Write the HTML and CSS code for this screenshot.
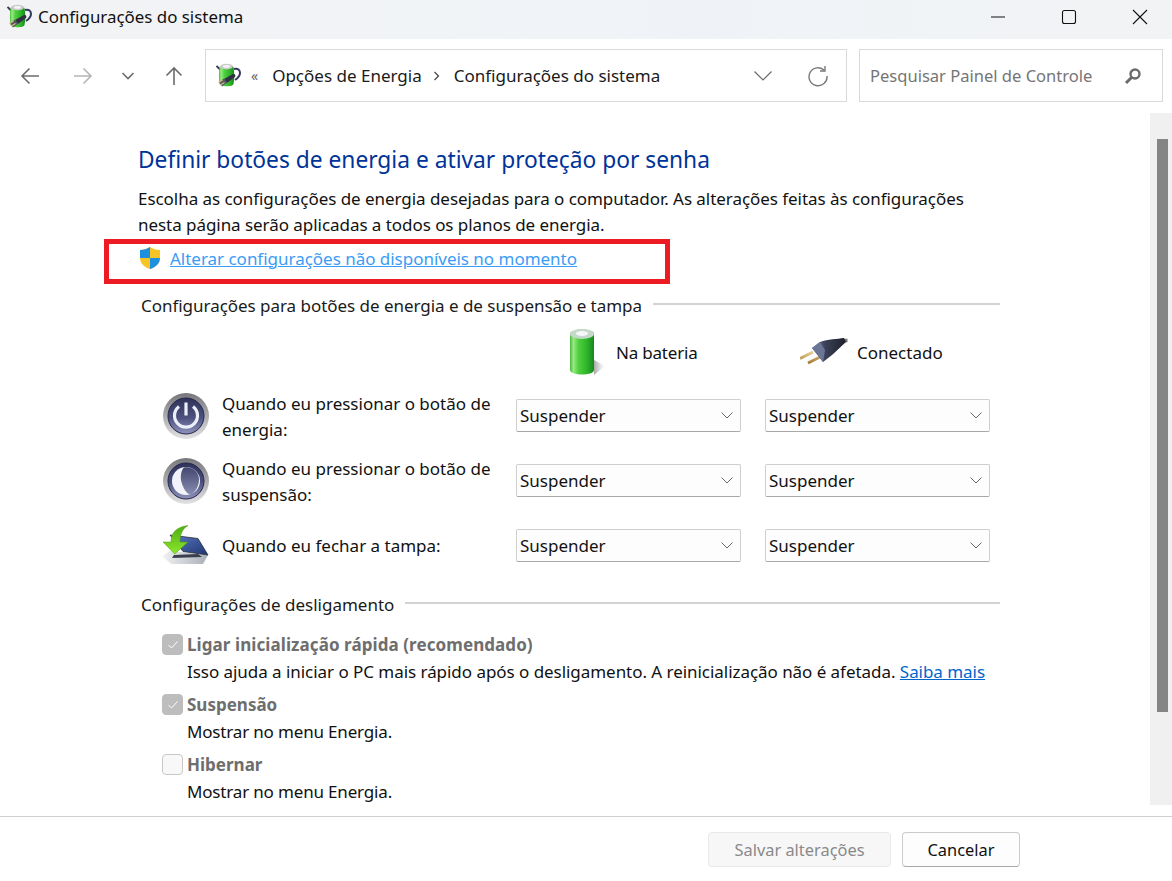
FILE: index.html
```html
<!DOCTYPE html>
<html lang="pt-BR">
<head>
<meta charset="utf-8">
<title>Configurações do sistema</title>
<link rel="stylesheet" href="styles.css">
</head>
<body>
<svg class="defs" width="0" height="0" aria-hidden="true">
  <defs>
    <linearGradient id="gBat" x1="0" x2="1" y1="0" y2="0">
      <stop offset="0" stop-color="#48b83e"/><stop offset=".14" stop-color="#9aea84"/><stop offset=".35" stop-color="#4fd03f"/><stop offset=".7" stop-color="#2fb52b"/><stop offset="1" stop-color="#17871c"/>
    </linearGradient>
    <linearGradient id="gShadow" x1="0" x2="1" y1="0" y2="0">
      <stop offset="0" stop-color="#8a8a8a" stop-opacity=".75"/><stop offset="1" stop-color="#bbb" stop-opacity="0"/>
    </linearGradient>
    <linearGradient id="gRing" x1="0" x2="0" y1="0" y2="1">
      <stop offset="0" stop-color="#77777b"/><stop offset="1" stop-color="#e2e2e4"/>
    </linearGradient>
    <linearGradient id="gDisc" x1="0" x2="0" y1="0" y2="1">
      <stop offset="0" stop-color="#2e3258"/><stop offset=".55" stop-color="#4d5180"/><stop offset="1" stop-color="#9094bb"/>
    </linearGradient>
    <linearGradient id="gMoon" x1="0" x2="0" y1="0" y2="1">
      <stop offset="0" stop-color="#43476f"/><stop offset="1" stop-color="#8a8eb2"/>
    </linearGradient>
    <linearGradient id="gPlug" x1="0" x2="1" y1="0" y2="0">
      <stop offset="0" stop-color="#6d7694"/><stop offset=".4" stop-color="#3a4058"/><stop offset="1" stop-color="#1f2028"/>
    </linearGradient>
    <linearGradient id="gGold" x1="0" x2="0" y1="0" y2="1">
      <stop offset="0" stop-color="#e6cf95"/><stop offset="1" stop-color="#a67c32"/>
    </linearGradient>
    <linearGradient id="gArrow" x1="0" x2="0" y1="0" y2="1">
      <stop offset="0" stop-color="#4fae12"/><stop offset="1" stop-color="#8ce62c"/>
    </linearGradient>
    <linearGradient id="gScreen" x1="0" x2="1" y1="0" y2="1">
      <stop offset="0" stop-color="#5b7cc4"/><stop offset="1" stop-color="#1f356f"/>
    </linearGradient>
    <linearGradient id="gBase" x1="0" x2="1" y1="0" y2="0">
      <stop offset="0" stop-color="#f2f3f5"/><stop offset="1" stop-color="#a9adb6"/>
    </linearGradient>
    <symbol id="appicon" viewBox="0 0 25 25">
      <path d="M0.500 3l4 4" stroke="#34385c" stroke-width="1.800"/>
      <path d="M18 6c4-1 6 1 6 4 0 3-2 5-5 7" fill="none" stroke="#34385c" stroke-width="2"/>
      <path d="M3.500 4c0-2 13.500-2 14 0 1 6 1 12 0 17-.5 3-13 3-14 0-.8-5-.8-11 0-17z" fill="url(#gBat)"/>
      <ellipse cx="10.500" cy="3.600" rx="6.500" ry="2.800" fill="#c9ccc9"/>
      <ellipse cx="10.500" cy="3.400" rx="3.500" ry="1.300" fill="#f4f4f4"/>
      <path d="M8 16l9-5c2-.5 3 1 2 3l-8 6z" fill="#2f3140"/>
      <path d="M3 19l5-3.500 3 4.500-5 3.500z" fill="#555866"/>
      <path d="M2.500 19.500l4-2.500M4.500 22l4-2.500" stroke="#d8bb78" stroke-width="1.300"/>
    </symbol>
  </defs>
</svg>

<div class="window">
  <header class="titlebar">
    <svg class="app-icon" width="25" height="25"><use href="#appicon"/></svg>
    <span class="title-text">Configurações do sistema</span>
    <div class="win-controls">
      <svg width="16" height="16" viewBox="0 0 16 16"><path d="M1 8h14" stroke="#111" fill="none"/></svg>
      <svg width="16" height="16" viewBox="0 0 16 16"><rect x="1.500" y="1.500" width="13" height="13" rx="2" stroke="#111" stroke-width="1.100" fill="none"/></svg>
      <svg width="16" height="16" viewBox="0 0 16 16"><path d="M1 1l14 14M15 1L1 15" stroke="#111" stroke-width="1.100" fill="none"/></svg>
    </div>
  </header>

  <nav class="toolbar">
    <div class="nav-buttons">
      <svg class="nav-back" width="20" height="20" viewBox="0 0 20 20"><path d="M19 10H2M9.500 2.500L2 10l7.500 7.500" stroke="#6b6b6b" stroke-width="1.600" fill="none"/></svg>
      <svg class="nav-fwd" width="20" height="20" viewBox="0 0 20 20"><path d="M1 10h17M10.500 2.500L18 10l-7.500 7.500" stroke="#b5b5b5" stroke-width="1.600" fill="none"/></svg>
      <svg class="nav-drop" width="14" height="14" viewBox="0 0 14 14"><path d="M1.500 4L7 9.500 12.500 4" stroke="#6b6b6b" stroke-width="1.600" fill="none"/></svg>
      <svg class="nav-up" width="20" height="20" viewBox="0 0 20 20"><path d="M10 19V2M2.500 9.500L10 2l7.500 7.500" stroke="#6b6b6b" stroke-width="1.600" fill="none"/></svg>
    </div>
    <div class="address">
      <svg class="addr-icon" width="25" height="25"><use href="#appicon"/></svg>
      <span class="addr-chev">«</span>
      <span class="crumb">Opções de Energia</span>
      <svg class="crumb-sep" width="8" height="10" viewBox="0 0 8 10"><path d="M1.500 1l4 4-4 4" stroke="#444" stroke-width="1.200" fill="none"/></svg>
      <span class="crumb">Configurações do sistema</span>
      <svg class="addr-drop" width="20" height="12" viewBox="0 0 20 12"><path d="M1.500 1.500L10 10l8.500-8.500" stroke="#6b6b6b" stroke-width="1.200" fill="none"/></svg>
      <svg class="addr-refresh" width="22" height="22" viewBox="0 0 22 22"><path d="M17.500 5.500A9 9 0 1 0 20 11" stroke="#7a7a7a" stroke-width="1.400" fill="none"/><path d="M18 1v5h-5" stroke="#7a7a7a" stroke-width="1.400" fill="none"/></svg>
    </div>
    <div class="search">
      <span class="search-text">Pesquisar Painel de Controle</span>
      <svg width="18" height="18" viewBox="0 0 18 18"><circle cx="11" cy="7" r="4.500" stroke="#6b6b6b" stroke-width="2.400" fill="none"/><path d="M7.500 10.500L2 16" stroke="#6b6b6b" stroke-width="3" fill="none"/></svg>
    </div>
  </nav>

  <div class="main">
    <main class="content">
      <h1 class="heading">Definir botões de energia e ativar proteção por senha</h1>
      <p class="intro">Escolha as configurações de energia desejadas para o computador. As alterações feitas às configurações<br>nesta página serão aplicadas a todos os planos de energia.</p>
      <div class="elevate">
        <svg width="24" height="24" viewBox="0 0 24 24">
          <path d="M12 1c3 2 6 3 10 3v8c0 5-4 9-10 11C6 21 2 17 2 12V4c4 0 7-1 10-3z" fill="#f7c325"/>
          <path d="M12 1v11H2V4c4 0 7-1 10-3z" fill="#1f8fe0"/>
          <path d="M12 12h10c0 5-4 9-10 11z" fill="#1f8fe0"/>
        </svg>
        <a class="link-light" href="#">Alterar configurações não disponíveis no momento</a>
      </div>

      <div class="group-head group-first"><span>Configurações para botões de energia e de suspensão e tampa</span><i></i></div>

      <div class="col-heads">
        <div class="col-head col-bat">
          <svg width="38" height="48" viewBox="0 0 38 48">
            <path d="M26 32l11 6-11 9z" fill="url(#gShadow)"/>
            <path d="M2 6c0-6 24-6 24 0v36c0 6-24 6-24 0z" fill="url(#gBat)"/>
            <ellipse cx="14" cy="6" rx="12" ry="5" fill="#c6d8ca"/>
            <ellipse cx="14" cy="5.500" rx="6" ry="2.500" fill="#f7f7f9"/>
          </svg>
          <span class="label-bat">Na bateria</span>
        </div>
        <div class="col-head col-plug">
          <svg width="48" height="28" viewBox="0 0 48 28">
            <path d="M0 20.500l13-6.500M8 25l13-6.500" stroke="url(#gGold)" stroke-width="3" fill="none"/>
            <path d="M42 2.500h5.500" stroke="#777" stroke-width="3.500"/>
            <path d="M12 10l8-6c8-3 17-3 24-4l2 4c-5 4-9 9-14 13l-9 7z" fill="url(#gPlug)"/>
            <path d="M12 10l8-6 5 8-2 12z" fill="#6b7596"/>
          </svg>
          <span>Conectado</span>
        </div>
      </div>

      <div class="setting-row">
        <svg class="set-icon" width="48" height="48" viewBox="0 0 48 48">
          <circle cx="24" cy="24" r="23" fill="url(#gRing)"/><circle cx="24" cy="24" r="18" fill="url(#gDisc)" stroke="#23264a"/>
          <path d="M17 14.500a11.500 11.500 0 1 0 14 0" stroke="#eceef8" stroke-width="3.200" fill="none"/><path d="M24 10.500v13" stroke="#eceef8" stroke-width="3.200"/>
        </svg>
        <div class="set-label">Quando eu pressionar o botão de energia:</div>
        <div class="select"><span>Suspender</span><svg width="12" height="7" viewBox="0 0 12 7"><path d="M.500 .500L6 6 11.500 .500" stroke="#666" fill="none"/></svg></div>
        <div class="select"><span>Suspender</span><svg width="12" height="7" viewBox="0 0 12 7"><path d="M.500 .500L6 6 11.500 .500" stroke="#666" fill="none"/></svg></div>
      </div>
      <div class="setting-row">
        <svg class="set-icon" width="48" height="48" viewBox="0 0 48 48">
          <circle cx="24" cy="24" r="23" fill="url(#gRing)"/><circle cx="24" cy="24" r="18" fill="url(#gDisc)" stroke="#23264a"/>
          <circle cx="24" cy="24" r="14" fill="#f2f3fa"/>
          <path d="M22 10.500c8-1.500 15 4 15 12 0 7-4 13-8.500 15.500-5-2-8.500-9-9.500-15-.7-5 .5-10 3-12.500z" fill="url(#gMoon)"/>
        </svg>
        <div class="set-label">Quando eu pressionar o botão de suspensão:</div>
        <div class="select"><span>Suspender</span><svg width="12" height="7" viewBox="0 0 12 7"><path d="M.500 .500L6 6 11.500 .500" stroke="#666" fill="none"/></svg></div>
        <div class="select"><span>Suspender</span><svg width="12" height="7" viewBox="0 0 12 7"><path d="M.500 .500L6 6 11.500 .500" stroke="#666" fill="none"/></svg></div>
      </div>
      <div class="setting-row">
        <svg class="set-icon" width="48" height="48" viewBox="0 0 48 48">
          <path d="M0 34l8-5 38 4-5 9-32 0z" fill="url(#gBase)"/>
          <path d="M12 33l24-1 4 3-30 1z" fill="#3a3f4c"/>
          <path d="M8 13l28 3.500L46 33l-25-3.500z" fill="url(#gScreen)" stroke="#2a2d3a" stroke-width=".8"/>
          <path d="M26 3.500C14 5 9 11 9 20H1l11.700 12L26 20h-8c0-7 2-13 8-16.500z" fill="url(#gArrow)" stroke="#4a9a10" stroke-width=".5"/>
        </svg>
        <div class="set-label set-label-single">Quando eu fechar a tampa:</div>
        <div class="select"><span>Suspender</span><svg width="12" height="7" viewBox="0 0 12 7"><path d="M.500 .500L6 6 11.500 .500" stroke="#666" fill="none"/></svg></div>
        <div class="select"><span>Suspender</span><svg width="12" height="7" viewBox="0 0 12 7"><path d="M.500 .500L6 6 11.500 .500" stroke="#666" fill="none"/></svg></div>
      </div>

      <div class="group-head group-second"><span>Configurações de desligamento</span><i></i></div>

      <div class="check-row">
        <span class="check checked"><svg width="12" height="10" viewBox="0 0 12 10"><path d="M1.500 5l3 3 6-6.500" stroke="#fff" fill="none"/></svg></span>
        <div class="check-body"><div class="check-title check-title-long">Ligar inicialização rápida (recomendado)</div>
        <div class="check-desc check-desc-long">Isso ajuda a iniciar o PC mais rápido após o desligamento. A reinicialização não é afetada. <a href="#" class="link">Saiba mais</a></div></div>
      </div>
      <div class="check-row">
        <span class="check checked"><svg width="12" height="10" viewBox="0 0 12 10"><path d="M1.500 5l3 3 6-6.500" stroke="#fff" fill="none"/></svg></span>
        <div class="check-body"><div class="check-title">Suspensão</div>
        <div class="check-desc">Mostrar no menu Energia.</div></div>
      </div>
      <div class="check-row">
        <span class="check"></span>
        <div class="check-body"><div class="check-title">Hibernar</div>
        <div class="check-desc">Mostrar no menu Energia.</div></div>
      </div>
    </main>
    <div class="scrollbar"><div class="thumb"></div></div>
  </div>

  <footer class="footer">
    <button class="btn btn-save" disabled>Salvar alterações</button>
    <button class="btn btn-cancel">Cancelar</button>
  </footer>

  <div class="highlight"></div>
</div>
</body>
</html>
```

FILE: styles.css
```css
* { box-sizing: border-box; }
html, body { margin: 0; padding: 0; }
body { font-family: "Noto Sans", "Open Sans", sans-serif; font-size: 17px; color: #111; background: #fff; }
.defs { position: absolute; }
.window { position: relative; width: 1172px; height: 881px; display: flex; flex-direction: column; overflow: hidden; }

.titlebar { height: 39px; flex: none; background: linear-gradient(90deg, #f3f3f5, #eff3f7 60%, #f2f3f5); display: flex; align-items: center; padding: 0 0 6px 7px; font-size: 16.9px; }
.app-icon { margin-right: 6px; }
.title-text { color: #111; }
.win-controls { margin-left: auto; display: flex; gap: 55px; padding-right: 24px; }
.win-controls svg { display: block; }

.toolbar { height: 74px; flex: none; display: flex; align-items: flex-start; padding: 10px 9px 0 0; }
.nav-buttons { width: 205px; height: 53px; flex: none; display: flex; align-items: center; padding-left: 20px; }
.nav-fwd { margin-left: 33px; }
.nav-drop { margin-left: 28px; }
.nav-up { margin-left: 29px; }
.address { width: 642px; height: 53px; flex: none; border: 1px solid #d9d9d9; display: flex; align-items: center; padding-left: 10px; }
.addr-icon { margin-right: 10px; }
.addr-chev { font-size: 14px; color: #666; margin-right: 14px; }
.crumb { color: #1a1a1a; }
.crumb:first-of-type { letter-spacing: -.05px; }
.crumb-sep { margin: 0 13px 0 11px; }
.addr-drop { margin-left: auto; }
.addr-refresh { margin: 0 17px 0 34px; }
.search { width: 304px; height: 53px; flex: none; margin-left: 12px; border: 1px solid #d9d9d9; display: flex; align-items: center; justify-content: space-between; padding: 0 20px 0 10px; color: #757575; font-size: 16.55px; }

.main { flex: 1; display: flex; min-height: 0; }
.content { flex: 1; min-width: 0; padding: 32px 0 0 138px; }
.scrollbar { width: 22px; flex: none; height: 692px; background: #f0f0f0; padding: 26px 4px 0 7px; }
.thumb { height: 573px; background: #858585; }

.heading { margin: 0; font-size: 22.75px; font-weight: 400; color: #003399; line-height: 30px; }
.intro { margin: 11px 0 0; line-height: 26px; color: #111; letter-spacing: -.05px; }
.elevate { display: flex; align-items: center; gap: 8px; margin-top: 7px; height: 26px; }
.link-light { color: #3b9cf5; letter-spacing: -.02px; }
.link { color: #0066cc; }

.group-head { display: flex; align-items: center; gap: 11px; margin-left: 3px; width: 859px; height: 26px; color: #1a1a1a; }
.group-head i { flex: 1; height: 2px; margin-bottom: 2px; background: #d3d3d3; }
.group-first { margin-top: 21px; letter-spacing: -.035px; }
.group-second { margin-top: 13px; margin-bottom: 14px; }

.col-heads { display: flex; height: 48px; margin: 10px 0 7px 430px; }
.col-head { display: flex; align-items: center; }
.col-bat { width: 232px; gap: 10px; }
.col-plug { gap: 9px; }
.label-bat { letter-spacing: -.2px; }

.setting-row { display: flex; align-items: center; height: 65px; margin-left: 24px; }
.set-icon { flex: none; margin-right: 12px; }
.set-label { width: 294px; flex: none; line-height: 26px; padding-top: 2px; }
.set-label-single { padding-top: 0; }
.select { width: 225px; height: 33px; flex: none; margin-right: 24px; display: flex; align-items: center; justify-content: space-between; padding: 0 7px 0 3px; background: #fdfdfd; border: 1px solid #cfcfcf; border-bottom-color: #a8a8a8; border-radius: 2px; color: #111; }

.check-row { display: flex; margin-left: 24px; height: 60px; }
.check { width: 21px; height: 21px; flex: none; margin: 3px 4px 0 0; border: 1px solid #c8c8c8; border-radius: 4px; background: #f8f8f8; display: flex; align-items: center; justify-content: center; }
.check.checked { background: #bdbdbd; border-color: #bdbdbd; }
.check-title { font-weight: 700; color: #6e6e6e; line-height: 27px; }
.check-title-long { letter-spacing: .08px; }
.check-desc { line-height: 27px; color: #111; letter-spacing: -.17px; }
.check-desc-long { letter-spacing: -.045px; }

.footer { height: 65px; flex: none; border-top: 1px solid #cfcfcf; display: flex; justify-content: flex-end; align-items: flex-start; gap: 11px; padding: 15px 152px 0 0; }
.btn { font: inherit; font-size: 16.4px; height: 35px; border-radius: 4px; padding: 0; }
.btn-save { width: 183px; background: #f7f7f7; border: 1px solid #e9e9e9; color: #8a8a8a; }
.btn-cancel { width: 118px; background: #fdfdfd; border: 1px solid #cccccc; border-bottom-color: #a8a8a8; color: #111; }

.highlight { position: absolute; left: 104px; top: 239px; width: 566px; height: 45px; border: 5px solid #ed1c24; }
```
